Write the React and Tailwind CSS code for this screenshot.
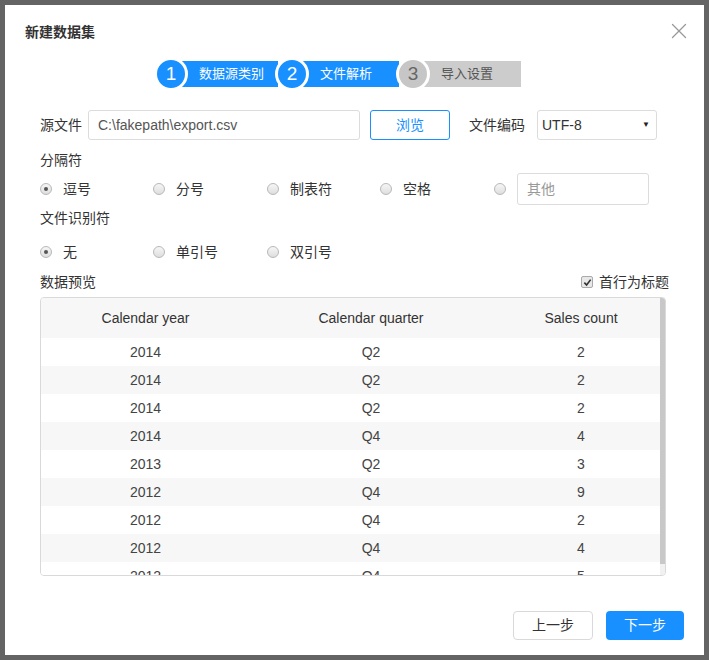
import { X } from 'lucide-react'

const rows = [
  ['2014', 'Q2', '2'],
  ['2014', 'Q2', '2'],
  ['2014', 'Q2', '2'],
  ['2014', 'Q4', '4'],
  ['2013', 'Q2', '3'],
  ['2012', 'Q4', '9'],
  ['2012', 'Q4', '2'],
  ['2012', 'Q4', '4'],
  ['2012', 'Q4', '5'],
]

const Step = ({ n, label, active, first, wide }) => (
  <div className={first ? 'flex items-center' : '-ml-[3px] flex items-center'}>
    <div
      className={
        active
          ? 'relative z-10 flex h-[34px] w-[34px] items-center justify-center rounded-full border-[3px] border-white bg-[#1890ff] text-[19px] text-white'
          : 'relative z-10 flex h-[34px] w-[34px] items-center justify-center rounded-full border-[3px] border-white bg-[#c6c6c6] text-[19px] text-[#666]'
      }
    >
      {n}
    </div>
    <div
      className={
        (active ? 'bg-[#1890ff] text-white' : 'bg-[#cccccc] text-[#555]') +
        (wide ? ' w-[108px]' : ' w-[107px]') +
        ' -ml-[17px] flex h-[26px] items-center pl-[28px] text-[13px]'
      }
    >
      {label}
    </div>
  </div>
)

const Radio = ({ checked }) => (
  <span className="flex h-[12px] w-[12px] items-center justify-center rounded-full border border-[#b8b8b8] bg-gradient-to-b from-[#f6f6f6] to-[#dedede]">
    {checked && <span className="h-[4px] w-[4px] rounded-full bg-[#555]" />}
  </span>
)

const RadioItem = ({ label, checked, w }) => (
  <div className={'flex items-center gap-[11px] ' + w}>
    <Radio checked={checked} />
    <span>{label}</span>
  </div>
)

export default function App() {
  return (
    <div
      className="min-h-screen bg-[#646464] p-[5px] text-[14px] text-[#333]"
      style={{ fontFamily: '"Liberation Sans", "Noto Sans CJK SC", sans-serif' }}
    >
      <div className="flex h-[650px] w-[699px] flex-col bg-white">
        {/* header */}
        <div className="box-content flex h-[20px] items-center justify-between pl-[20px] pr-[12px] pt-[17px]">
          <h2 className="text-[14px] font-semibold leading-[20px] text-[#333]">新建数据集</h2>
          <X size={26} strokeWidth={1.2} className="-mt-[2px] text-[#999]" />
        </div>

        <div className="flex flex-1 flex-col px-[35px]">
          {/* steps */}
          <div className="mt-[15px] ml-[114px] flex">
            <Step n="1" label="数据源类别" active first />
            <Step n="2" label="文件解析" active />
            <Step n="3" label="导入设置" wide />
          </div>

          {/* source file row */}
          <div className="mt-[19px] flex h-[30px] items-center">
            <span className="w-[48px]">源文件</span>
            <div className="flex h-[30px] w-[272px] items-center rounded-[3px] border border-[#dcdcdc] px-[9px] text-[#555]">
              C:\fakepath\export.csv
            </div>
            <button className="ml-[10px] h-[30px] w-[80px] rounded-[3px] border border-[#1890ff] text-[#1890ff]">
              浏览
            </button>
            <span className="ml-[19px] w-[68px]">文件编码</span>
            <div className="flex h-[30px] w-[120px] items-center justify-between rounded-[3px] border border-[#dcdcdc] pl-[4px] pr-[6px] text-[#333]">
              <span>UTF-8</span>
              <span className="text-[8px] text-[#222]">▼</span>
            </div>
          </div>

          <div className="mt-[10px] leading-[20px]">分隔符</div>
          <div className="mt-[3px] flex h-[32px] items-center">
            <RadioItem label="逗号" checked w="w-[113px]" />
            <RadioItem label="分号" w="w-[114px]" />
            <RadioItem label="制表符" w="w-[113px]" />
            <RadioItem label="空格" w="w-[114px]" />
            <Radio />
            <div className="ml-[11px] flex h-[32px] w-[132px] items-center rounded-[3px] border border-[#dcdcdc] px-[9px] text-[#999]">
              其他
            </div>
          </div>

          <div className="mt-[3px] leading-[20px]">文件识别符</div>
          <div className="mt-[8px] flex h-[32px] items-center">
            <RadioItem label="无" checked w="w-[113px]" />
            <RadioItem label="单引号" w="w-[114px]" />
            <RadioItem label="双引号" w="w-[113px]" />
          </div>

          <div className="mt-[4px] flex items-center justify-between leading-[20px]">
            <span>数据预览</span>
            <div className="flex items-center gap-[6px]">
              <span className="flex h-[12px] w-[12px] items-center justify-center rounded-[2px] border border-[#aaa] bg-[#e8e8e8]">
                <svg width="9" height="9" viewBox="0 0 10 10">
                  <path d="M1.5 5.2 L4 7.8 L8.5 1.8" fill="none" stroke="#333" strokeWidth="1.8" />
                </svg>
              </span>
              <span>首行为标题</span>
            </div>
          </div>

          {/* table */}
          <div className="mt-[5px] flex h-[279px] w-[626px] overflow-hidden rounded-[4px] border border-[#d9d9d9]">
            <div className="flex-1">
              <div className="grid h-[40px] grid-cols-[209px_242px_1fr] items-center bg-[#f7f7f7] text-[#333]">
                <div className="text-center">Calendar year</div>
                <div className="text-center">Calendar quarter</div>
                <div className="pl-[10px] text-center">Sales count</div>
              </div>
              {rows.map((r, i) => (
                <div
                  key={i}
                  className={
                    (i % 2 === 1 ? 'bg-[#f7f7f7] ' : 'bg-white ') +
                    'grid h-[28px] grid-cols-[209px_242px_1fr] items-center text-[#444]'
                  }
                >
                  <div className="text-center">{r[0]}</div>
                  <div className="text-center">{r[1]}</div>
                  <div className="pl-[10px] text-center">{r[2]}</div>
                </div>
              ))}
            </div>
            <div className="flex w-[5px] flex-col bg-[#f1f1f1]">
              <div className="h-[266px] bg-[#c8c8c8]" />
            </div>
          </div>
        </div>

        {/* footer */}
        <div className="flex justify-end gap-[13px] pb-[15px] pr-[20px]">
          <button className="h-[29px] w-[80px] rounded-[4px] border border-[#d9d9d9] bg-white text-[#333]">
            上一步
          </button>
          <button className="h-[29px] w-[78px] rounded-[4px] bg-[#1890ff] text-white">下一步</button>
        </div>
      </div>
    </div>
  )
}
